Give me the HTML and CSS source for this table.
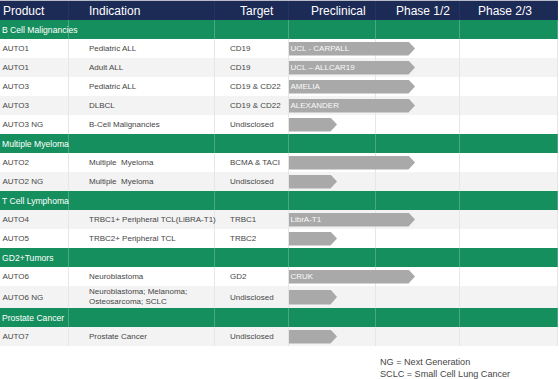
FILE: index.html
```html
<!DOCTYPE html>
<html>
<head>
<meta charset="utf-8">
<link rel="stylesheet" href="styles.css">
</head>
<body>
<div class="table">
  <div class="row head">
    <div class="cell h1">Product</div>
    <div class="cell h2">Indication</div>
    <div class="cell h3">Target</div>
    <div class="cell h4">Preclinical</div>
    <div class="cell h5">Phase 1/2</div>
    <div class="cell h6">Phase 2/3</div>
  </div>

  <div class="row group">
    <div class="cell g">B Cell Malignancies</div><div class="cell"></div><div class="cell"></div><div class="cell"></div><div class="cell"></div><div class="cell"></div>
  </div>
  <div class="row white">
    <div class="cell c1">AUTO1</div><div class="cell c2">Pediatric ALL</div><div class="cell c3">CD19</div>
    <div class="cell c4"><div class="arrow long">UCL - CARPALL</div></div><div class="cell"></div><div class="cell"></div>
  </div>
  <div class="row gray">
    <div class="cell c1">AUTO1</div><div class="cell c2">Adult ALL</div><div class="cell c3">CD19</div>
    <div class="cell c4"><div class="arrow long">UCL – ALLCAR19</div></div><div class="cell"></div><div class="cell"></div>
  </div>
  <div class="row white">
    <div class="cell c1">AUTO3</div><div class="cell c2">Pediatric ALL</div><div class="cell c3">CD19 &amp; CD22</div>
    <div class="cell c4"><div class="arrow long">AMELIA</div></div><div class="cell"></div><div class="cell"></div>
  </div>
  <div class="row gray">
    <div class="cell c1">AUTO3</div><div class="cell c2">DLBCL</div><div class="cell c3">CD19 &amp; CD22</div>
    <div class="cell c4"><div class="arrow long">ALEXANDER</div></div><div class="cell"></div><div class="cell"></div>
  </div>
  <div class="row white">
    <div class="cell c1">AUTO3 NG</div><div class="cell c2">B-Cell Malignancies</div><div class="cell c3">Undisclosed</div>
    <div class="cell c4"><div class="arrow short"></div></div><div class="cell"></div><div class="cell"></div>
  </div>

  <div class="row group">
    <div class="cell g">Multiple Myeloma</div><div class="cell"></div><div class="cell"></div><div class="cell"></div><div class="cell"></div><div class="cell"></div>
  </div>
  <div class="row white">
    <div class="cell c1">AUTO2</div><div class="cell c2">Multiple&nbsp; Myeloma</div><div class="cell c3">BCMA &amp; TACI</div>
    <div class="cell c4"><div class="arrow long"></div></div><div class="cell"></div><div class="cell"></div>
  </div>
  <div class="row gray">
    <div class="cell c1">AUTO2 NG</div><div class="cell c2">Multiple&nbsp; Myeloma</div><div class="cell c3">Undisclosed</div>
    <div class="cell c4"><div class="arrow short"></div></div><div class="cell"></div><div class="cell"></div>
  </div>

  <div class="row group">
    <div class="cell g">T Cell Lymphoma</div><div class="cell"></div><div class="cell"></div><div class="cell"></div><div class="cell"></div><div class="cell"></div>
  </div>
  <div class="row gray">
    <div class="cell c1">AUTO4</div><div class="cell c2">TRBC1+ Peripheral TCL(LiBRA-T1)</div><div class="cell c3">TRBC1</div>
    <div class="cell c4"><div class="arrow long">LibrA-T1</div></div><div class="cell"></div><div class="cell"></div>
  </div>
  <div class="row white">
    <div class="cell c1">AUTO5</div><div class="cell c2">TRBC2+ Peripheral TCL</div><div class="cell c3">TRBC2</div>
    <div class="cell c4"><div class="arrow short"></div></div><div class="cell"></div><div class="cell"></div>
  </div>

  <div class="row group">
    <div class="cell g">GD2+Tumors</div><div class="cell"></div><div class="cell"></div><div class="cell"></div><div class="cell"></div><div class="cell"></div>
  </div>
  <div class="row white">
    <div class="cell c1">AUTO6</div><div class="cell c2">Neuroblastoma</div><div class="cell c3">GD2</div>
    <div class="cell c4"><div class="arrow long">CRUK</div></div><div class="cell"></div><div class="cell"></div>
  </div>
  <div class="row gray tall">
    <div class="cell c1">AUTO6 NG</div><div class="cell c2 two">Neuroblastoma; Melanoma;<br>Osteosarcoma; SCLC</div><div class="cell c3">Undisclosed</div>
    <div class="cell c4"><div class="arrow short tallarrow"></div></div><div class="cell"></div><div class="cell"></div>
  </div>

  <div class="row group">
    <div class="cell g">Prostate Cancer</div><div class="cell"></div><div class="cell"></div><div class="cell"></div><div class="cell"></div><div class="cell"></div>
  </div>
  <div class="row gray">
    <div class="cell c1">AUTO7</div><div class="cell c2">Prostate Cancer</div><div class="cell c3">Undisclosed</div>
    <div class="cell c4"><div class="arrow short"></div></div><div class="cell"></div><div class="cell"></div>
  </div>
</div>

<div class="legend">
  <div>NG = Next Generation</div>
  <div>SCLC = Small Cell Lung Cancer</div>
</div>
</body>
</html>
```

FILE: styles.css
```css
* { box-sizing: border-box; }

body {
  margin: 0;
  background: #ffffff;
  font-family: "Liberation Sans", Arial, Helvetica, sans-serif;
  color: #464646;
}

.table {
  width: 558px;
  display: flex;
  flex-direction: column;
}

.row {
  display: grid;
  grid-template-columns: 69px 146px 74px 87px 84px 98px;
  height: 19px;
}

.cell {
  display: flex;
  align-items: center;
  border-right: 1px solid #e6e6e6;
  white-space: nowrap;
  min-width: 0;
  font-size: 8px;
}

.row.white { background: #ffffff; }
.row.gray { background: #f3f3f3; }
.row.tall { height: 22px; }

.head {
  height: 20px;
  background: #1c2a56;
  border-top: 1px solid #b9bcc6;
}
.head .cell {
  color: #ffffff;
  font-size: 12px;
  border-right: 1px solid #24335f;
}
.h1 { padding-left: 3px; }
.h2 { padding-left: 20px; }
.h3 { padding-left: 25px; }
.h4 { padding-left: 22px; }
.h5 { padding-left: 20px; }
.h6 { padding-left: 18px; }

.group { background: #168f5e; }
.group .cell {
  border-right: 1px solid #48a87f;
  color: #ffffff;
  font-size: 8.6px;
  overflow: visible;
}
.g { padding-left: 2px; }

.c1 { padding-left: 2.5px; }
.c2 { padding-left: 20px; }
.c3 { padding-left: 15px; }
.c4 { overflow: visible; }

.two {
  white-space: normal;
  line-height: 10px;
}

.arrow {
  position: relative;
  z-index: 1;
  flex: none;
  height: 14px;
  background: #a9a9a9;
  color: #fafafa;
  font-size: 8px;
  line-height: 14px;
  padding-left: 1.5px;
  clip-path: polygon(0 0, calc(100% - 6.5px) 0, 100% 50%, calc(100% - 6.5px) 100%, 0 100%);
}
.arrow.long { width: 126px; }
.arrow.short { width: 48px; }
.arrow.tallarrow { height: 15px; }

.legend {
  margin-top: 10px;
  margin-left: 380px;
  font-size: 9.1px;
  line-height: 12px;
  color: #464646;
}
```
